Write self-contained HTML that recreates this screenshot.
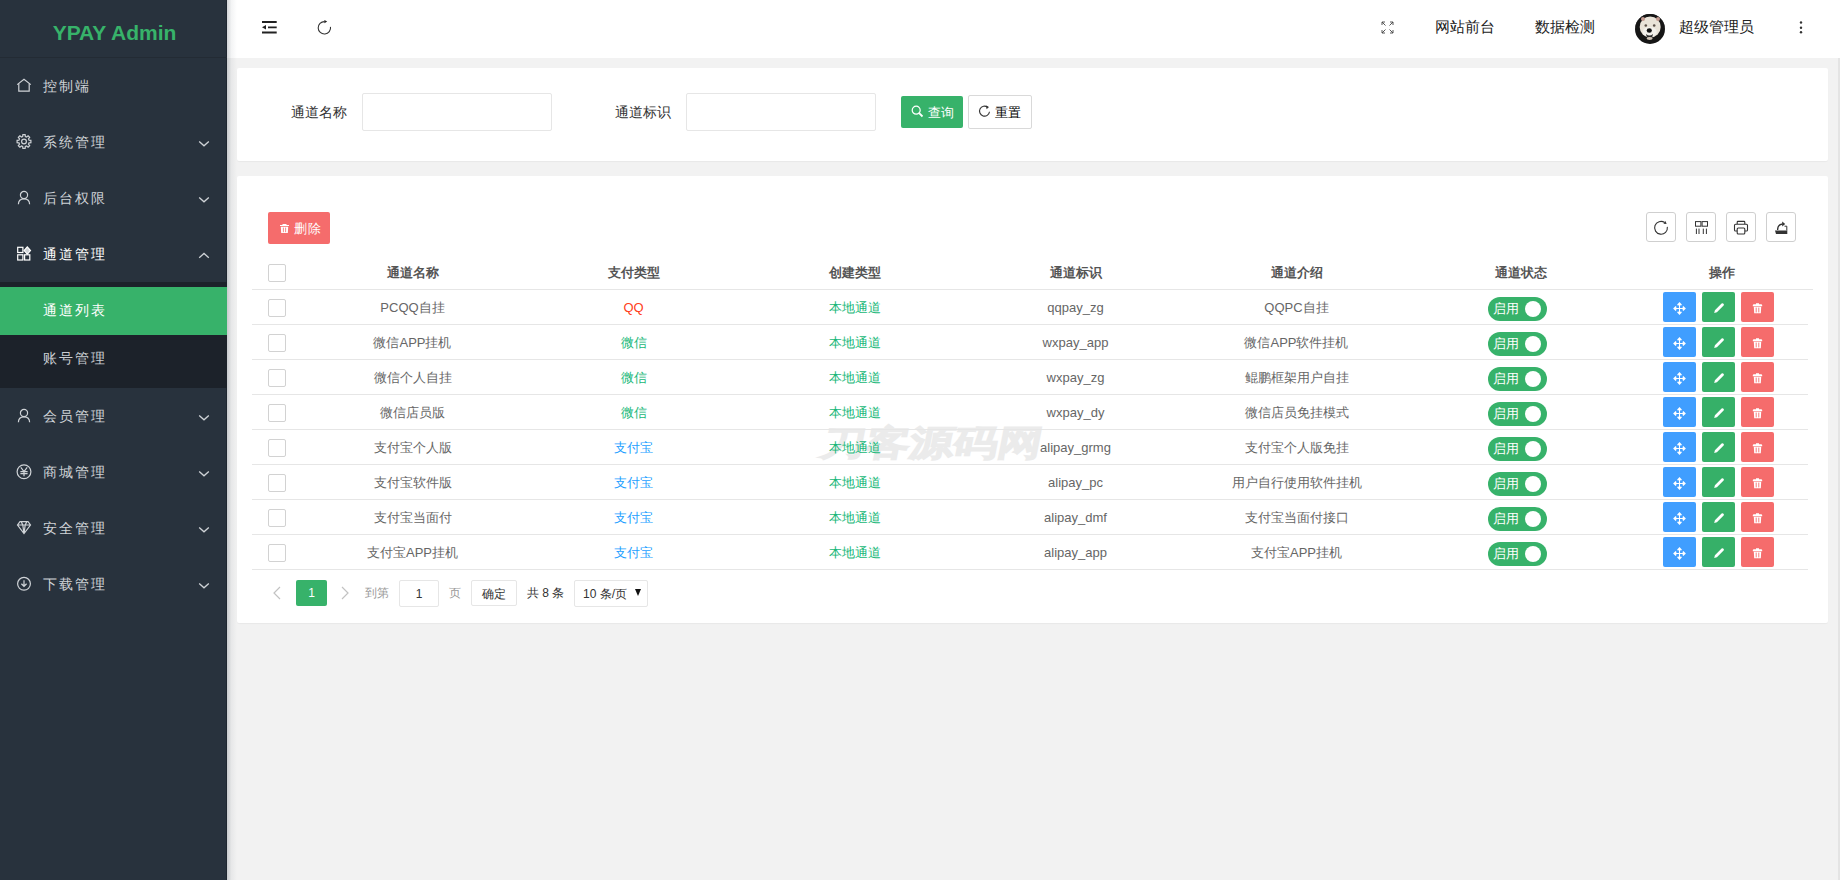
<!DOCTYPE html>
<html><head><meta charset="utf-8">
<style>
*{margin:0;padding:0;box-sizing:border-box}
html,body{width:1840px;height:880px;overflow:hidden;background:#f2f2f2;font-family:"Liberation Sans",sans-serif;font-size:14px;color:#333}
.abs{position:absolute}
#side{position:absolute;left:0;top:0;width:227px;height:880px;background:#28323d;border-right:1px solid #1f2731}
#shadow{position:absolute;left:227px;top:0;width:10px;height:880px;z-index:5;background:linear-gradient(to right,rgba(30,45,60,.2),rgba(30,45,60,.05) 45%,rgba(30,45,60,0))}
#logo{position:absolute;left:0;top:0;width:227px;height:58px;border-bottom:1px solid #232b34;color:#37b36a;font-weight:bold;font-size:21px;text-align:center;line-height:65px;padding-left:2px}
.mt{position:absolute;left:43px;height:20px;line-height:20px;font-size:14px;letter-spacing:2px;white-space:nowrap}
#sub{position:absolute;left:0;top:282px;width:227px;height:106px;background:#1c222a}
#sub .on{position:absolute;left:0;top:5px;width:227px;height:48px;background:#37b26a}
#header{position:absolute;left:227px;top:0;width:1613px;height:58px;background:#fff}
.card{position:absolute;background:#fff;border-radius:2px;box-shadow:0 1px 1px rgba(0,0,0,.04)}
.lbl{position:absolute;font-size:14px;color:#333;height:20px;line-height:20px;white-space:nowrap}
.inp{position:absolute;border:1px solid #e6e6e6;border-radius:2px;background:#fff}
.htxt{position:absolute;top:17px;height:20px;line-height:20px;font-size:15px;color:#222;white-space:nowrap}
.th{position:absolute;top:256px;height:34px;line-height:34px;text-align:center;font-size:13px;font-weight:bold;color:#555}
.tr{position:absolute;left:252px;width:1556px;height:1px;background:#e6e6e6}
.td{position:absolute;height:35px;line-height:37px;text-align:center;font-size:13px;color:#666;white-space:nowrap}
.cb{position:absolute;left:268px;width:18px;height:18px;border:1px solid #d2d2d2;border-radius:2px;background:#fff}
.sw{position:absolute;left:1488px;width:59px;height:24px;border-radius:12px;background:#37b26a}
.sw span{position:absolute;left:5px;top:2px;height:20px;line-height:20px;color:#fff;font-size:13px}
.sw i{position:absolute;left:37px;top:4px;width:16px;height:16px;border-radius:50%;background:#fff}
.ab{position:absolute;width:33px;height:30px;border-radius:2px;display:flex;align-items:center;justify-content:center}
.tb{position:absolute;top:212px;width:30px;height:30px;border:1px solid #cfcfcf;border-radius:3px}
.pg{position:absolute;font-size:12px;height:26px;line-height:26px;white-space:nowrap}
</style></head>
<body>
<div id="side">
  <div id="logo">YPAY Admin</div>
  <div id="sub"><div class="on"></div></div>
  <svg class="abs" style="left:16px;top:78px" width="16" height="16" viewBox="0 0 16 16" fill="none" stroke="#cfd3d7" stroke-width="1.2"><path d="M1.2 6.6 L8 1.2 L14.8 6.6"/><path d="M2.8 5.6 V13.2 H13.2 V5.6"/></svg>
<div class="mt" style="top:76px;color:#cfd3d7">控制端</div>
<svg class="abs" style="left:16px;top:134px" width="16" height="16" viewBox="0 0 16 16" fill="none" stroke="#cfd3d7" stroke-width="1.2"><path d="M6.66 2.47 L6.88 0.59 L9.12 0.59 L9.34 2.47 L10.61 3.00 L12.10 1.82 L13.68 3.40 L12.50 4.89 L13.03 6.16 L14.91 6.38 L14.91 8.62 L13.03 8.84 L12.50 10.11 L13.68 11.60 L12.10 13.18 L10.61 12.00 L9.34 12.53 L9.12 14.41 L6.88 14.41 L6.66 12.53 L5.39 12.00 L3.90 13.18 L2.32 11.60 L3.50 10.11 L2.97 8.84 L1.09 8.62 L1.09 6.38 L2.97 6.16 L3.50 4.89 L2.32 3.40 L3.90 1.82 L5.39 3.00Z"/><circle cx="8" cy="7.5" r="2.4"/></svg>
<div class="mt" style="top:132px;color:#cfd3d7">系统管理</div>
<svg class="abs" style="left:198px;top:138px" width="12" height="10" viewBox="0 0 12 10"><path d="M1.2 3.4 L6 7.8 L10.8 3.4" fill="none" stroke="#cfd3d7" stroke-width="1.3"/></svg>
<svg class="abs" style="left:16px;top:190px" width="16" height="16" viewBox="0 0 16 16" fill="none" stroke="#cfd3d7" stroke-width="1.2"><circle cx="8" cy="5" r="3.6"/><path d="M2.4 14.2 C2.4 10.6 5 8.8 8 8.8 C11 8.8 13.6 10.6 13.6 14.2"/></svg>
<div class="mt" style="top:188px;color:#cfd3d7">后台权限</div>
<svg class="abs" style="left:198px;top:194px" width="12" height="10" viewBox="0 0 12 10"><path d="M1.2 3.4 L6 7.8 L10.8 3.4" fill="none" stroke="#cfd3d7" stroke-width="1.3"/></svg>
<svg class="abs" style="left:16px;top:246px" width="16" height="16" viewBox="0 0 16 16" fill="none" stroke="#ffffff" stroke-width="1.2"><rect x="1.7" y="1.3" width="5.2" height="5.2"/><rect x="1.7" y="8.8" width="5.2" height="5.2"/><rect x="8.6" y="8.8" width="5.2" height="5.2"/><path d="M11.3 0.9 L14.5 4.6 L11.3 8.2 L8.1 4.6Z" fill="#cfd3d7"/></svg>
<div class="mt" style="top:244px;color:#ffffff">通道管理</div>
<svg class="abs" style="left:198px;top:250px" width="12" height="10" viewBox="0 0 12 10"><path d="M1.2 7.8 L6 3.4 L10.8 7.8" fill="none" stroke="#cfd3d7" stroke-width="1.3"/></svg>
<svg class="abs" style="left:16px;top:408px" width="16" height="16" viewBox="0 0 16 16" fill="none" stroke="#cfd3d7" stroke-width="1.2"><circle cx="8" cy="5" r="3.6"/><path d="M2.4 14.2 C2.4 10.6 5 8.8 8 8.8 C11 8.8 13.6 10.6 13.6 14.2"/></svg>
<div class="mt" style="top:406px;color:#cfd3d7">会员管理</div>
<svg class="abs" style="left:198px;top:412px" width="12" height="10" viewBox="0 0 12 10"><path d="M1.2 3.4 L6 7.8 L10.8 3.4" fill="none" stroke="#cfd3d7" stroke-width="1.3"/></svg>
<svg class="abs" style="left:16px;top:464px" width="16" height="16" viewBox="0 0 16 16" fill="none" stroke="#cfd3d7" stroke-width="1.2"><circle cx="8" cy="7.7" r="6.9"/><path d="M4.8 3.4 L8 7.6 L11.2 3.4 M4.4 7.6 H11.6 M4.4 9.6 H11.6 M8 7.6 V12.2"/></svg>
<div class="mt" style="top:462px;color:#cfd3d7">商城管理</div>
<svg class="abs" style="left:198px;top:468px" width="12" height="10" viewBox="0 0 12 10"><path d="M1.2 3.4 L6 7.8 L10.8 3.4" fill="none" stroke="#cfd3d7" stroke-width="1.3"/></svg>
<svg class="abs" style="left:16px;top:520px" width="16" height="16" viewBox="0 0 16 16" fill="none" stroke="#cfd3d7" stroke-width="1.2"><path d="M4 1.7 H12 L14.5 5 L8 13.6 L1.5 5Z M1.5 5 H14.5 M5.2 1.7 L6.8 5 L8 13.6 L9.2 5 L10.8 1.7"/></svg>
<div class="mt" style="top:518px;color:#cfd3d7">安全管理</div>
<svg class="abs" style="left:198px;top:524px" width="12" height="10" viewBox="0 0 12 10"><path d="M1.2 3.4 L6 7.8 L10.8 3.4" fill="none" stroke="#cfd3d7" stroke-width="1.3"/></svg>
<svg class="abs" style="left:16px;top:576px" width="16" height="16" viewBox="0 0 16 16" fill="none" stroke="#cfd3d7" stroke-width="1.2"><circle cx="8" cy="7.8" r="6.4"/><path d="M8 4.2 V10 M5.4 7.8 L8 10.3 L10.6 7.8"/></svg>
<div class="mt" style="top:574px;color:#cfd3d7">下载管理</div>
<svg class="abs" style="left:198px;top:580px" width="12" height="10" viewBox="0 0 12 10"><path d="M1.2 3.4 L6 7.8 L10.8 3.4" fill="none" stroke="#cfd3d7" stroke-width="1.3"/></svg>
  <div class="mt" style="top:300px;color:#fff">通道列表</div>
  <div class="mt" style="top:348px;color:#c9cdd2">账号管理</div>
</div>
<div style="position:absolute;left:1838px;top:58px;width:2px;height:822px;background:#e4e4e4"></div>
<div id="header">
  <svg class="abs" style="left:35px;top:20px" width="16" height="15" viewBox="0 0 16 15"><path d="M0 2 H14.7 M6 7.3 H14.7 M0 12.5 H14.7" stroke="#222" stroke-width="1.8"/><path d="M0 7.3 L4 5 V9.6Z" fill="#222"/></svg>
  <svg class="abs" style="left:90px;top:20px" width="16" height="16" viewBox="0 0 16 16"><path d="M13.5 6.8 A6.2 6.2 0 1 1 7.6 1.6" fill="none" stroke="#333" stroke-width="1.1"/><path d="M7.4 0 L10.2 1.6 L7.4 3.3Z" fill="#222"/></svg>
  <svg class="abs" style="left:1154px;top:21px" width="13" height="13" viewBox="0 0 13 13" fill="none" stroke="#444" stroke-width="0.9"><path d="M1 1 L4.5 4.5 M1 1 V4 M1 1 H4 M12 1 L8.5 4.5 M12 1 V4 M12 1 H9 M1 12 L4.5 8.5 M1 12 V9 M1 12 H4 M12 12 L8.5 8.5 M12 12 V9 M12 12 H9"/></svg>
  <div class="htxt" style="left:1208px">网站前台</div>
  <div class="htxt" style="left:1308px">数据检测</div>
  <svg class="abs" style="left:1408px;top:14px" width="30" height="30" viewBox="0 0 30 30"><defs><clipPath id="cc"><circle cx="15" cy="15" r="15"/></clipPath></defs><g clip-path="url(#cc)"><rect width="30" height="30" fill="#161616"/><ellipse cx="15.2" cy="13" rx="10.5" ry="10.5" fill="#e9e3d8"/><ellipse cx="14.8" cy="18" rx="7" ry="5" fill="#f3f1ec"/><circle cx="8" cy="5" r="2" fill="#c49a90"/><circle cx="23" cy="5" r="2" fill="#c49a90"/><circle cx="10.8" cy="11.5" r="1.3" fill="#5a5048"/><circle cx="19.2" cy="11.5" r="1.3" fill="#5a5048"/><ellipse cx="14.3" cy="16.5" rx="2.6" ry="2.2" fill="#111"/><path d="M11 20 Q14.5 23 18 20 L17 24 Q14.5 26 12 24Z" fill="#2a2a2a"/><ellipse cx="14.6" cy="24.5" rx="3" ry="1.4" fill="#cfc3b6"/><path d="M0 14 Q3 0 15 1.5 Q27 0 30 14 V0 H0Z" fill="#161616"/></g></svg>
  <div class="htxt" style="left:1452px">超级管理员</div>
  <svg class="abs" style="left:1572px;top:20px" width="4" height="15" viewBox="0 0 4 15"><circle cx="2" cy="2.5" r="1.2" fill="#333"/><circle cx="2" cy="7.7" r="1.2" fill="#333"/><circle cx="2" cy="12.3" r="1.2" fill="#333"/></svg>
</div>

<div id="shadow"></div>
<div class="card" style="left:237px;top:68px;width:1591px;height:93px"></div>
<div class="lbl" style="left:291px;top:102px">通道名称</div>
<div class="inp" style="left:362px;top:93px;width:190px;height:38px"></div>
<div class="lbl" style="left:615px;top:102px">通道标识</div>
<div class="inp" style="left:686px;top:93px;width:190px;height:38px"></div>
<div class="abs" style="left:901px;top:96px;width:62px;height:32px;background:#37b26a;border-radius:2px;color:#fff;font-size:13px;line-height:33px;text-align:right;padding-right:9px">查询</div>
<svg class="abs" style="left:911px;top:105px" width="13" height="13" viewBox="0 0 13 13" fill="none" stroke="#fff" stroke-width="1.2"><circle cx="5.2" cy="5.2" r="4"/><path d="M8.2 8.2 L11.5 11.5" stroke-width="1.8"/></svg>
<div class="abs" style="left:968px;top:95px;width:64px;height:34px;border:1px solid #d9d9d9;border-radius:2px;background:#fff;color:#000;font-size:13px;line-height:33px;text-align:right;padding-right:10px">重置</div>
<svg class="abs" style="left:978px;top:105px" width="13" height="13" viewBox="0 0 13 13"><path d="M9.6 2.2 A5 5 0 1 0 11.5 6.8" fill="none" stroke="#333" stroke-width="1.1"/><path d="M8 0.6 L11 2 L8.6 4.2Z" fill="#333"/></svg>

<div class="card" style="left:237px;top:176px;width:1591px;height:447px"></div>
<div class="abs" style="left:822px;top:419px;font-size:44px;line-height:48px;color:#ebebeb;-webkit-text-stroke:3px #ebebeb;white-space:nowrap;transform-origin:0 50%;transform:skewX(-11deg) scaleY(.8)">刀客源码网</div>
<div class="abs" style="left:268px;top:212px;width:62px;height:32px;background:#f56c6c;border-radius:2px;color:#fff;font-size:13px;line-height:33px;text-align:right;padding-right:9px;letter-spacing:0.3px">删除</div>
<svg class="abs" style="left:279px;top:223px" width="11" height="11" viewBox="0 0 11 11"><path d="M1 2 H10 V3 H1Z M3.5 1 H7.5 V2 H3.5Z" fill="#fff"/><path d="M1.8 3.8 H9.2 L8.8 10 H2.2Z" fill="#fff"/><path d="M4.4 4.6 V9.2 M6.6 4.6 V9.2" stroke="#f56c6c" stroke-width="0.8"/></svg>

<div class="tb" style="left:1646px"></div><svg class="abs" style="left:1653px;top:219px" width="16" height="17" viewBox="0 0 16 17"><path d="M14.34 7.91 A6.4 6.4 0 1 1 11.67 3.56" fill="none" stroke="#333" stroke-width="1.1"/><path d="M13.64 4.93 L10.45 4.78 L12.40 1.99Z" fill="#333"/></svg>
<div class="tb" style="left:1686px"></div><svg class="abs" style="left:1693px;top:219px" width="16" height="17" viewBox="0 0 16 17"><g fill="none" stroke="#333" stroke-width="1"><rect x="2.5" y="2.6" width="5.4" height="4.6"/><rect x="9.1" y="2.6" width="5.4" height="4.6"/><path d="M3.4 9.6 V15 M6 9.6 V15 M10.3 9.6 V15 M13.4 9.6 V15"/></g></svg>
<div class="tb" style="left:1726px"></div><svg class="abs" style="left:1733px;top:219px" width="16" height="17" viewBox="0 0 16 17"><g fill="none" stroke="#333" stroke-width="1.1"><path d="M4.2 5 V3.2 Q4.2 2.4 5 2.4 H11 Q11.8 2.4 11.8 3.2 V5"/><path d="M4 12 H2.6 Q1.5 12 1.5 10.9 V6.3 Q1.5 5.2 2.6 5.2 H13.4 Q14.5 5.2 14.5 6.3 V10.9 Q14.5 12 13.4 12 H12"/><rect x="4.2" y="9" width="7.6" height="6" rx="1"/></g></svg>
<div class="tb" style="left:1766px"></div><svg class="abs" style="left:1773px;top:219px" width="16" height="17" viewBox="0 0 16 17"><path d="M2 11.4 H14.3 V15 H3Z" fill="#333"/><path d="M13.8 11.5 V7.2 H11.5" fill="none" stroke="#333" stroke-width="1"/><path d="M4.6 11 Q4.6 5.2 9.6 5" fill="none" stroke="#333" stroke-width="1.3"/><path d="M9.2 2.4 L12.2 5 L9.2 7.4Z" fill="#333"/></svg>

<div class="cb" style="top:264px"></div>
<div class="abs" style="left:252px;top:289px;width:1561px;height:1px;background:#e6e6e6"></div>
<div class="th" style="left:302px;width:221px">通道名称</div>
<div class="th" style="left:523px;width:221px">支付类型</div>
<div class="th" style="left:744px;width:221px">创建类型</div>
<div class="th" style="left:965px;width:221px">通道标识</div>
<div class="th" style="left:1186px;width:221px">通道介绍</div>
<div class="th" style="left:1407px;width:228px">通道状态</div>
<div class="th" style="left:1635px;width:173px">操作</div>
<div class="tr" style="top:289px"></div>
<div class="cb" style="top:299px"></div>
<div class="td" style="left:302px;width:221px;top:289px">PCQQ自挂</div>
<div class="td" style="left:523px;width:221px;top:289px;color:#ff4020">QQ</div>
<div class="td" style="left:744px;width:221px;top:289px;color:#16b777">本地通道</div>
<div class="td" style="left:965px;width:221px;top:289px">qqpay_zg</div>
<div class="td" style="left:1186px;width:221px;top:289px">QQPC自挂</div>
<div class="sw" style="top:297px"><span>启用</span><i></i></div>
<div class="ab" style="left:1663px;top:292px;background:#409eff"><svg style="margin-top:2px" width="13" height="13" viewBox="0 0 13 13" fill="none" stroke="#fff"><path d="M6.5 1.5 V11.5 M1.5 6.5 H11.5" stroke-width="1.1"/><path d="M4.6 3.2 L6.5 1.2 L8.4 3.2 M4.6 9.8 L6.5 11.8 L8.4 9.8 M3.2 4.6 L1.2 6.5 L3.2 8.4 M9.8 4.6 L11.8 6.5 L9.8 8.4" stroke-width="1.5"/></svg></div>
<div class="ab" style="left:1702px;top:292px;background:#36b068"><svg style="margin-top:2px" width="12" height="12" viewBox="0 0 12 12"><path d="M1.2 11 L1.9 8.3 L8.6 1.6 Q9.4 0.8 10.2 1.6 L10.6 2 Q11.4 2.8 10.6 3.6 L3.9 10.3 Z" fill="#fff"/></svg></div>
<div class="ab" style="left:1741px;top:292px;background:#f56c6c"><svg style="margin-top:2px" width="11" height="11" viewBox="0 0 11 11"><path d="M0.8 2.2 Q0.8 1.2 2 1.2 H9 Q10.2 1.2 10.2 2.2 V3.2 H0.8Z M4 0.3 H7 V1.2 H4Z" fill="#fff"/><path d="M1.8 3.8 H9.2 L8.8 10.2 H2.2Z" fill="#fff"/><path d="M4.2 4.6 V9.4 M6.8 4.6 V9.4" stroke="#f56c6c" stroke-width="0.9"/></svg></div>
<div class="tr" style="top:324px"></div>
<div class="cb" style="top:334px"></div>
<div class="td" style="left:302px;width:221px;top:324px">微信APP挂机</div>
<div class="td" style="left:523px;width:221px;top:324px;color:#16b777">微信</div>
<div class="td" style="left:744px;width:221px;top:324px;color:#16b777">本地通道</div>
<div class="td" style="left:965px;width:221px;top:324px">wxpay_app</div>
<div class="td" style="left:1186px;width:221px;top:324px">微信APP软件挂机</div>
<div class="sw" style="top:332px"><span>启用</span><i></i></div>
<div class="ab" style="left:1663px;top:327px;background:#409eff"><svg style="margin-top:2px" width="13" height="13" viewBox="0 0 13 13" fill="none" stroke="#fff"><path d="M6.5 1.5 V11.5 M1.5 6.5 H11.5" stroke-width="1.1"/><path d="M4.6 3.2 L6.5 1.2 L8.4 3.2 M4.6 9.8 L6.5 11.8 L8.4 9.8 M3.2 4.6 L1.2 6.5 L3.2 8.4 M9.8 4.6 L11.8 6.5 L9.8 8.4" stroke-width="1.5"/></svg></div>
<div class="ab" style="left:1702px;top:327px;background:#36b068"><svg style="margin-top:2px" width="12" height="12" viewBox="0 0 12 12"><path d="M1.2 11 L1.9 8.3 L8.6 1.6 Q9.4 0.8 10.2 1.6 L10.6 2 Q11.4 2.8 10.6 3.6 L3.9 10.3 Z" fill="#fff"/></svg></div>
<div class="ab" style="left:1741px;top:327px;background:#f56c6c"><svg style="margin-top:2px" width="11" height="11" viewBox="0 0 11 11"><path d="M0.8 2.2 Q0.8 1.2 2 1.2 H9 Q10.2 1.2 10.2 2.2 V3.2 H0.8Z M4 0.3 H7 V1.2 H4Z" fill="#fff"/><path d="M1.8 3.8 H9.2 L8.8 10.2 H2.2Z" fill="#fff"/><path d="M4.2 4.6 V9.4 M6.8 4.6 V9.4" stroke="#f56c6c" stroke-width="0.9"/></svg></div>
<div class="tr" style="top:359px"></div>
<div class="cb" style="top:369px"></div>
<div class="td" style="left:302px;width:221px;top:359px">微信个人自挂</div>
<div class="td" style="left:523px;width:221px;top:359px;color:#16b777">微信</div>
<div class="td" style="left:744px;width:221px;top:359px;color:#16b777">本地通道</div>
<div class="td" style="left:965px;width:221px;top:359px">wxpay_zg</div>
<div class="td" style="left:1186px;width:221px;top:359px">鲲鹏框架用户自挂</div>
<div class="sw" style="top:367px"><span>启用</span><i></i></div>
<div class="ab" style="left:1663px;top:362px;background:#409eff"><svg style="margin-top:2px" width="13" height="13" viewBox="0 0 13 13" fill="none" stroke="#fff"><path d="M6.5 1.5 V11.5 M1.5 6.5 H11.5" stroke-width="1.1"/><path d="M4.6 3.2 L6.5 1.2 L8.4 3.2 M4.6 9.8 L6.5 11.8 L8.4 9.8 M3.2 4.6 L1.2 6.5 L3.2 8.4 M9.8 4.6 L11.8 6.5 L9.8 8.4" stroke-width="1.5"/></svg></div>
<div class="ab" style="left:1702px;top:362px;background:#36b068"><svg style="margin-top:2px" width="12" height="12" viewBox="0 0 12 12"><path d="M1.2 11 L1.9 8.3 L8.6 1.6 Q9.4 0.8 10.2 1.6 L10.6 2 Q11.4 2.8 10.6 3.6 L3.9 10.3 Z" fill="#fff"/></svg></div>
<div class="ab" style="left:1741px;top:362px;background:#f56c6c"><svg style="margin-top:2px" width="11" height="11" viewBox="0 0 11 11"><path d="M0.8 2.2 Q0.8 1.2 2 1.2 H9 Q10.2 1.2 10.2 2.2 V3.2 H0.8Z M4 0.3 H7 V1.2 H4Z" fill="#fff"/><path d="M1.8 3.8 H9.2 L8.8 10.2 H2.2Z" fill="#fff"/><path d="M4.2 4.6 V9.4 M6.8 4.6 V9.4" stroke="#f56c6c" stroke-width="0.9"/></svg></div>
<div class="tr" style="top:394px"></div>
<div class="cb" style="top:404px"></div>
<div class="td" style="left:302px;width:221px;top:394px">微信店员版</div>
<div class="td" style="left:523px;width:221px;top:394px;color:#16b777">微信</div>
<div class="td" style="left:744px;width:221px;top:394px;color:#16b777">本地通道</div>
<div class="td" style="left:965px;width:221px;top:394px">wxpay_dy</div>
<div class="td" style="left:1186px;width:221px;top:394px">微信店员免挂模式</div>
<div class="sw" style="top:402px"><span>启用</span><i></i></div>
<div class="ab" style="left:1663px;top:397px;background:#409eff"><svg style="margin-top:2px" width="13" height="13" viewBox="0 0 13 13" fill="none" stroke="#fff"><path d="M6.5 1.5 V11.5 M1.5 6.5 H11.5" stroke-width="1.1"/><path d="M4.6 3.2 L6.5 1.2 L8.4 3.2 M4.6 9.8 L6.5 11.8 L8.4 9.8 M3.2 4.6 L1.2 6.5 L3.2 8.4 M9.8 4.6 L11.8 6.5 L9.8 8.4" stroke-width="1.5"/></svg></div>
<div class="ab" style="left:1702px;top:397px;background:#36b068"><svg style="margin-top:2px" width="12" height="12" viewBox="0 0 12 12"><path d="M1.2 11 L1.9 8.3 L8.6 1.6 Q9.4 0.8 10.2 1.6 L10.6 2 Q11.4 2.8 10.6 3.6 L3.9 10.3 Z" fill="#fff"/></svg></div>
<div class="ab" style="left:1741px;top:397px;background:#f56c6c"><svg style="margin-top:2px" width="11" height="11" viewBox="0 0 11 11"><path d="M0.8 2.2 Q0.8 1.2 2 1.2 H9 Q10.2 1.2 10.2 2.2 V3.2 H0.8Z M4 0.3 H7 V1.2 H4Z" fill="#fff"/><path d="M1.8 3.8 H9.2 L8.8 10.2 H2.2Z" fill="#fff"/><path d="M4.2 4.6 V9.4 M6.8 4.6 V9.4" stroke="#f56c6c" stroke-width="0.9"/></svg></div>
<div class="tr" style="top:429px"></div>
<div class="cb" style="top:439px"></div>
<div class="td" style="left:302px;width:221px;top:429px">支付宝个人版</div>
<div class="td" style="left:523px;width:221px;top:429px;color:#1e9fff">支付宝</div>
<div class="td" style="left:744px;width:221px;top:429px;color:#16b777">本地通道</div>
<div class="td" style="left:965px;width:221px;top:429px">alipay_grmg</div>
<div class="td" style="left:1186px;width:221px;top:429px">支付宝个人版免挂</div>
<div class="sw" style="top:437px"><span>启用</span><i></i></div>
<div class="ab" style="left:1663px;top:432px;background:#409eff"><svg style="margin-top:2px" width="13" height="13" viewBox="0 0 13 13" fill="none" stroke="#fff"><path d="M6.5 1.5 V11.5 M1.5 6.5 H11.5" stroke-width="1.1"/><path d="M4.6 3.2 L6.5 1.2 L8.4 3.2 M4.6 9.8 L6.5 11.8 L8.4 9.8 M3.2 4.6 L1.2 6.5 L3.2 8.4 M9.8 4.6 L11.8 6.5 L9.8 8.4" stroke-width="1.5"/></svg></div>
<div class="ab" style="left:1702px;top:432px;background:#36b068"><svg style="margin-top:2px" width="12" height="12" viewBox="0 0 12 12"><path d="M1.2 11 L1.9 8.3 L8.6 1.6 Q9.4 0.8 10.2 1.6 L10.6 2 Q11.4 2.8 10.6 3.6 L3.9 10.3 Z" fill="#fff"/></svg></div>
<div class="ab" style="left:1741px;top:432px;background:#f56c6c"><svg style="margin-top:2px" width="11" height="11" viewBox="0 0 11 11"><path d="M0.8 2.2 Q0.8 1.2 2 1.2 H9 Q10.2 1.2 10.2 2.2 V3.2 H0.8Z M4 0.3 H7 V1.2 H4Z" fill="#fff"/><path d="M1.8 3.8 H9.2 L8.8 10.2 H2.2Z" fill="#fff"/><path d="M4.2 4.6 V9.4 M6.8 4.6 V9.4" stroke="#f56c6c" stroke-width="0.9"/></svg></div>
<div class="tr" style="top:464px"></div>
<div class="cb" style="top:474px"></div>
<div class="td" style="left:302px;width:221px;top:464px">支付宝软件版</div>
<div class="td" style="left:523px;width:221px;top:464px;color:#1e9fff">支付宝</div>
<div class="td" style="left:744px;width:221px;top:464px;color:#16b777">本地通道</div>
<div class="td" style="left:965px;width:221px;top:464px">alipay_pc</div>
<div class="td" style="left:1186px;width:221px;top:464px">用户自行使用软件挂机</div>
<div class="sw" style="top:472px"><span>启用</span><i></i></div>
<div class="ab" style="left:1663px;top:467px;background:#409eff"><svg style="margin-top:2px" width="13" height="13" viewBox="0 0 13 13" fill="none" stroke="#fff"><path d="M6.5 1.5 V11.5 M1.5 6.5 H11.5" stroke-width="1.1"/><path d="M4.6 3.2 L6.5 1.2 L8.4 3.2 M4.6 9.8 L6.5 11.8 L8.4 9.8 M3.2 4.6 L1.2 6.5 L3.2 8.4 M9.8 4.6 L11.8 6.5 L9.8 8.4" stroke-width="1.5"/></svg></div>
<div class="ab" style="left:1702px;top:467px;background:#36b068"><svg style="margin-top:2px" width="12" height="12" viewBox="0 0 12 12"><path d="M1.2 11 L1.9 8.3 L8.6 1.6 Q9.4 0.8 10.2 1.6 L10.6 2 Q11.4 2.8 10.6 3.6 L3.9 10.3 Z" fill="#fff"/></svg></div>
<div class="ab" style="left:1741px;top:467px;background:#f56c6c"><svg style="margin-top:2px" width="11" height="11" viewBox="0 0 11 11"><path d="M0.8 2.2 Q0.8 1.2 2 1.2 H9 Q10.2 1.2 10.2 2.2 V3.2 H0.8Z M4 0.3 H7 V1.2 H4Z" fill="#fff"/><path d="M1.8 3.8 H9.2 L8.8 10.2 H2.2Z" fill="#fff"/><path d="M4.2 4.6 V9.4 M6.8 4.6 V9.4" stroke="#f56c6c" stroke-width="0.9"/></svg></div>
<div class="tr" style="top:499px"></div>
<div class="cb" style="top:509px"></div>
<div class="td" style="left:302px;width:221px;top:499px">支付宝当面付</div>
<div class="td" style="left:523px;width:221px;top:499px;color:#1e9fff">支付宝</div>
<div class="td" style="left:744px;width:221px;top:499px;color:#16b777">本地通道</div>
<div class="td" style="left:965px;width:221px;top:499px">alipay_dmf</div>
<div class="td" style="left:1186px;width:221px;top:499px">支付宝当面付接口</div>
<div class="sw" style="top:507px"><span>启用</span><i></i></div>
<div class="ab" style="left:1663px;top:502px;background:#409eff"><svg style="margin-top:2px" width="13" height="13" viewBox="0 0 13 13" fill="none" stroke="#fff"><path d="M6.5 1.5 V11.5 M1.5 6.5 H11.5" stroke-width="1.1"/><path d="M4.6 3.2 L6.5 1.2 L8.4 3.2 M4.6 9.8 L6.5 11.8 L8.4 9.8 M3.2 4.6 L1.2 6.5 L3.2 8.4 M9.8 4.6 L11.8 6.5 L9.8 8.4" stroke-width="1.5"/></svg></div>
<div class="ab" style="left:1702px;top:502px;background:#36b068"><svg style="margin-top:2px" width="12" height="12" viewBox="0 0 12 12"><path d="M1.2 11 L1.9 8.3 L8.6 1.6 Q9.4 0.8 10.2 1.6 L10.6 2 Q11.4 2.8 10.6 3.6 L3.9 10.3 Z" fill="#fff"/></svg></div>
<div class="ab" style="left:1741px;top:502px;background:#f56c6c"><svg style="margin-top:2px" width="11" height="11" viewBox="0 0 11 11"><path d="M0.8 2.2 Q0.8 1.2 2 1.2 H9 Q10.2 1.2 10.2 2.2 V3.2 H0.8Z M4 0.3 H7 V1.2 H4Z" fill="#fff"/><path d="M1.8 3.8 H9.2 L8.8 10.2 H2.2Z" fill="#fff"/><path d="M4.2 4.6 V9.4 M6.8 4.6 V9.4" stroke="#f56c6c" stroke-width="0.9"/></svg></div>
<div class="tr" style="top:534px"></div>
<div class="cb" style="top:544px"></div>
<div class="td" style="left:302px;width:221px;top:534px">支付宝APP挂机</div>
<div class="td" style="left:523px;width:221px;top:534px;color:#1e9fff">支付宝</div>
<div class="td" style="left:744px;width:221px;top:534px;color:#16b777">本地通道</div>
<div class="td" style="left:965px;width:221px;top:534px">alipay_app</div>
<div class="td" style="left:1186px;width:221px;top:534px">支付宝APP挂机</div>
<div class="sw" style="top:542px"><span>启用</span><i></i></div>
<div class="ab" style="left:1663px;top:537px;background:#409eff"><svg style="margin-top:2px" width="13" height="13" viewBox="0 0 13 13" fill="none" stroke="#fff"><path d="M6.5 1.5 V11.5 M1.5 6.5 H11.5" stroke-width="1.1"/><path d="M4.6 3.2 L6.5 1.2 L8.4 3.2 M4.6 9.8 L6.5 11.8 L8.4 9.8 M3.2 4.6 L1.2 6.5 L3.2 8.4 M9.8 4.6 L11.8 6.5 L9.8 8.4" stroke-width="1.5"/></svg></div>
<div class="ab" style="left:1702px;top:537px;background:#36b068"><svg style="margin-top:2px" width="12" height="12" viewBox="0 0 12 12"><path d="M1.2 11 L1.9 8.3 L8.6 1.6 Q9.4 0.8 10.2 1.6 L10.6 2 Q11.4 2.8 10.6 3.6 L3.9 10.3 Z" fill="#fff"/></svg></div>
<div class="ab" style="left:1741px;top:537px;background:#f56c6c"><svg style="margin-top:2px" width="11" height="11" viewBox="0 0 11 11"><path d="M0.8 2.2 Q0.8 1.2 2 1.2 H9 Q10.2 1.2 10.2 2.2 V3.2 H0.8Z M4 0.3 H7 V1.2 H4Z" fill="#fff"/><path d="M1.8 3.8 H9.2 L8.8 10.2 H2.2Z" fill="#fff"/><path d="M4.2 4.6 V9.4 M6.8 4.6 V9.4" stroke="#f56c6c" stroke-width="0.9"/></svg></div>
<div class="tr" style="top:569px"></div>

<svg class="abs" style="left:272px;top:586px" width="10" height="14" viewBox="0 0 10 14"><path d="M8 1 L2 7 L8 13" fill="none" stroke="#c2c2c2" stroke-width="1.2"/></svg>
<div class="pg" style="left:296px;top:580px;width:31px;background:#37b26a;color:#fff;text-align:center;border-radius:2px">1</div>
<svg class="abs" style="left:340px;top:586px" width="10" height="14" viewBox="0 0 10 14"><path d="M2 1 L8 7 L2 13" fill="none" stroke="#c2c2c2" stroke-width="1.2"/></svg>
<div class="pg" style="left:365px;top:580px;color:#999">到第</div>
<div class="pg" style="left:399px;top:580px;width:40px;height:27px;border:1px solid #e6e6e6;border-radius:2px;text-align:center;color:#333">1</div>
<div class="pg" style="left:449px;top:580px;color:#999">页</div>
<div class="pg" style="left:471px;top:580px;width:46px;border:1px solid #e6e6e6;border-radius:2px;text-align:center;color:#333">确定</div>
<div class="pg" style="left:527px;top:580px;color:#333">共 8 条</div>
<div class="pg" style="left:574px;top:580px;width:74px;height:27px;border:1px solid #e6e6e6;border-radius:2px;color:#333;padding-left:8px">10 条/页</div>
<div class="abs" style="left:635px;top:589px;width:0;height:0;border-left:3.5px solid transparent;border-right:3.5px solid transparent;border-top:7px solid #111"></div>


</body></html>
